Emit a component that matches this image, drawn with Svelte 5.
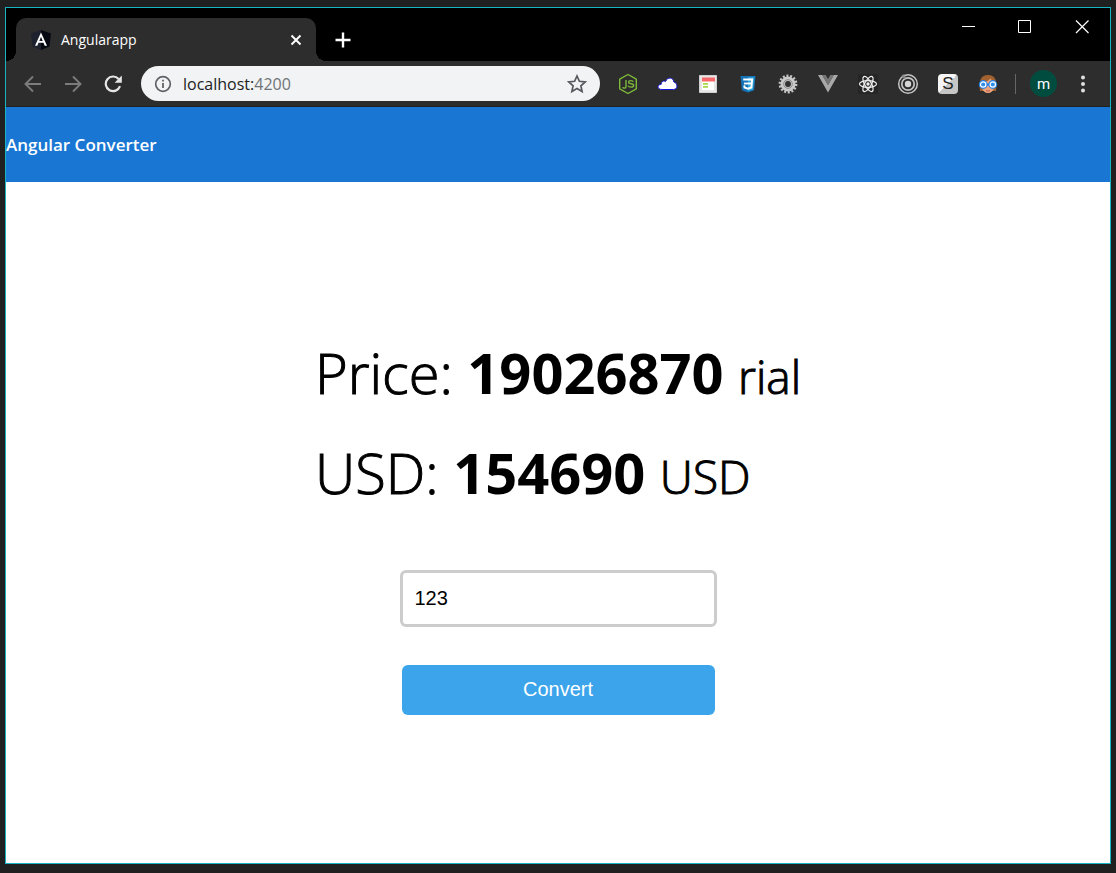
<script>
  let amount = $state('123');
  let price = $state(19026870);
  const rate = 154690;

  function convert(event) {
    event.preventDefault();
    price = Number(amount) * rate;
  }
</script>

<div class="desktop">
  <div class="window">
    <div class="titlebar">
      <div class="tab">
        <svg class="favicon" width="20" height="20" viewBox="0 0 20 20" aria-hidden="true">
          <path d="M10 0 0 3.5 1.5 16.500 10 20z" fill="#1d222e" />
          <path d="M10 0 20 3.500 18.500 16.500 10 20z" fill="#050811" />
          <path d="M10 2.500 4 15.800h2.300l1.200-3h5l1.200 3H16zM10 6.800l1.700 4.200H8.300z" fill="#fff" fill-rule="evenodd" />
        </svg>
        <span class="tab-title">Angularapp</span>
        <button class="plain tab-close" aria-label="Close tab">
          <svg width="12" height="12" viewBox="0 0 12 12"><path d="m1.500 1.500 9 9m0-9-9 9" stroke="#fff" stroke-width="2" /></svg>
        </button>
      </div>
      <button class="plain new-tab" aria-label="New tab">
        <svg width="16" height="16" viewBox="0 0 16 16"><path d="M8 .5v15M.5 8h15" stroke="#fff" stroke-width="2.400" /></svg>
      </button>
      <div class="controls">
        <button class="plain" aria-label="Minimize">
          <svg width="14" height="14" viewBox="0 0 14 14"><path d="M1 6.500h13" stroke="#fff" /></svg>
        </button>
        <button class="plain" aria-label="Maximize">
          <svg width="14" height="14" viewBox="0 0 14 14"><path d="M.5.5h12v12H.5z" stroke="#fff" fill="none" /></svg>
        </button>
        <button class="plain" aria-label="Close window">
          <svg width="14" height="14" viewBox="0 0 14 14"><path d="m1 .500 12.500 12.500m0-12.500L1 13" stroke="#fff" stroke-width="1.200" /></svg>
        </button>
      </div>
    </div>

    <div class="toolbar">
      <button class="plain tool" aria-label="Back">
        <svg width="18" height="18" viewBox="0 0 18 18" fill="none" stroke="#7c7c7c" stroke-width="1.900"><path d="M17 9H2M9 1.500 1.500 9 9 16.500" /></svg>
      </button>
      <button class="plain tool" aria-label="Forward">
        <svg width="18" height="18" viewBox="0 0 18 18" fill="none" stroke="#7c7c7c" stroke-width="1.900"><path d="M1 9h15M9 1.500 16.500 9 9 16.500" /></svg>
      </button>
      <button class="plain tool" aria-label="Reload">
        <svg width="18" height="18" viewBox="0 0 18 18"><path d="M14.600 4A7.300 7.300 0 1 0 16 11.200" fill="none" stroke="#e6e6e6" stroke-width="2.200" /><path d="M17.800.6v7.200h-7.200z" fill="#e6e6e6" /></svg>
      </button>
      <div class="address">
        <svg width="18" height="18" viewBox="0 0 18 18" aria-hidden="true"><circle cx="9" cy="9" r="7.300" fill="none" stroke="#5f6368" stroke-width="1.700" /><path d="M9 8v5M9 4.800v1.800" stroke="#5f6368" stroke-width="1.800" /></svg>
        <span class="url">localhost:<span class="port">4200</span></span>
        <button class="plain star" aria-label="Bookmark this page">
          <svg width="20" height="20" viewBox="0 0 20 20"><path d="m10 2 2.400 5.300 5.800.6-4.300 3.900 1.200 5.700-5.100-2.900-5.100 2.900 1.200-5.700-4.300-3.900 5.800-.6z" fill="none" stroke="#55595e" stroke-width="1.700" /></svg>
        </button>
      </div>
      <div class="extensions">
        <button class="plain tool" aria-label="Node.js">
          <svg width="22" height="22" viewBox="0 0 22 22" fill="none" stroke="#7fb93a" stroke-width="1.400"><path d="M11 1.500 19.300 6.200v9.600L11 20.500 2.700 15.800V6.200z" stroke-linejoin="round" /><path d="M9 7v6.200q0 2.400-2.300 1.800L5.500 14.300M16.300 8.700q-.5-1.100-2.400-1.100c-3 0-2.900 3 0 3.100 3.700.1 3.600 3.400.2 3.400q-2.600 0-3-1.500" /></svg>
        </button>
        <button class="plain tool" aria-label="Cloud">
          <svg width="22" height="22" viewBox="0 0 22 22"><path d="M5 16.500c-5.500 0-4.800-5.200-.8-5.200.1-3 2.800-4 4.300-2.700C10.800 3 16.500 4.800 16.800 9c3.800.7 4.800 7.500-.5 7.500z" fill="#fff" stroke="#1717db" /></svg>
        </button>
        <button class="plain tool" aria-label="Page layout">
          <svg width="20" height="20" viewBox="0 0 20 20"><path d="M1.500 1.500h17v17h-17z" fill="#e6e6e6" stroke="#d0d0d0" /><path d="M4 4h12v12H4z" fill="#fff" /><path d="M4 3.500h13v4H4z" fill="#f8686a" /><path d="M5 9h5v1.700H5zM5 12h5v1.700H5z" fill="#a5d84a" /></svg>
        </button>
        <button class="plain tool" aria-label="CSS viewer">
          <svg width="18" height="18" viewBox="0 0 18 18"><path d="M1.500 1h15l-1.400 14.300L9 17.500l-6.100-2.200z" fill="#1572b6" /><path d="M9 2.200h6.200l-1.200 12.200L9 16.200z" fill="#33a9dc" /><path d="M4.200 4.500h8.900l-.7 8L9 13.700l-3.500-1.200-.2-2.200" fill="none" stroke="#fff" stroke-width="1.900" /><path d="M5 8.500h7.500" stroke="#fff" stroke-width="1.900" /></svg>
        </button>
        <button class="plain tool" aria-label="Settings gear">
          <svg width="20" height="20" viewBox="0 0 20 20" fill="none"><circle cx="10" cy="10" r="8.200" stroke="#c5c5c5" stroke-width="2.400" stroke-dasharray="2 1.680" /><circle cx="10" cy="10" r="5.200" stroke="#c9c9c9" stroke-width="4.600" /><circle cx="10" cy="10" r="4.300" stroke="#898989" /><circle cx="10" cy="10" r="2.400" fill="#333" /></svg>
        </button>
        <button class="plain tool" aria-label="Vue devtools">
          <svg width="20" height="18" viewBox="0 0 20 18"><path d="M0 0h4.200L10 10 15.800 0H20L10 17.500z" fill="#a9a9a9" /><path d="M4.200 0h3.500L10 4l2.300-4h3.500L10 10.200z" fill="#777" /></svg>
        </button>
        <button class="plain tool" aria-label="React devtools">
          <svg width="20" height="20" viewBox="0 0 20 20" fill="none" stroke="#eee" stroke-width="1.200"><path d="M0 0h20v20H0z" fill="#262626" stroke="none" /><circle cx="10" cy="10" r="1.700" fill="#eee" stroke="none" /><ellipse cx="10" cy="10" rx="8.500" ry="3.300" /><ellipse cx="10" cy="10" rx="8.500" ry="3.300" transform="rotate(60 10 10)" /><ellipse cx="10" cy="10" rx="8.500" ry="3.300" transform="rotate(120 10 10)" /></svg>
        </button>
        <button class="plain tool" aria-label="Target">
          <svg width="22" height="22" viewBox="0 0 22 22" fill="none" stroke="#c4c4c4" stroke-width="1.500"><circle cx="11" cy="11" r="9.300" /><circle cx="11" cy="11" r="6.200" stroke-width="1.700" /><circle cx="11" cy="11" r="3.200" fill="#d6d6d6" stroke="none" /><path d="m5.500 2 3 3.300" stroke="#888" stroke-width="2.500" /></svg>
        </button>
        <button class="plain tool" aria-label="Stylus"><span class="letter-s">S</span></button>
        <button class="plain tool" aria-label="Reader">
          <svg width="20" height="20" viewBox="0 0 20 20"><path d="M2 17C.5 6 3 1 10 1s9.500 5 8 16z" fill="#a2622f" /><path d="M3.500 8Q10 8 12.500 4.500q1 3 4 3.500v5q-2 6-6.500 6t-6.500-6z" fill="#eaa57e" /><path d="M9 10.500h2" stroke="#1f7fe5" stroke-width="2" /><g fill="#1f7fe5"><circle cx="5.200" cy="10.500" r="4.400" /><circle cx="14.800" cy="10.500" r="4.400" /></g><g fill="#2d8eed" stroke="#fff" stroke-width="1.200"><circle cx="5.200" cy="10.500" r="2.700" /><circle cx="14.800" cy="10.500" r="2.700" /></g><path d="M8 16.500q2 1.300 4 0" stroke="#c45543" fill="none" /></svg>
        </button>
      </div>
      <span class="divider"></span>
      <button class="plain avatar" aria-label="Profile">m</button>
      <button class="plain menu" aria-label="Browser menu">
        <svg width="6" height="20" viewBox="0 0 6 20" fill="#e0e0e0"><circle cx="3" cy="3.500" r="2" /><circle cx="3" cy="10" r="2" /><circle cx="3" cy="16.500" r="2" /></svg>
      </button>
    </div>

    <header>
      <h1>Angular Converter</h1>
    </header>

    <main>
      <div class="results">
        <p>Price: <strong>{price}</strong> <small>rial</small></p>
        <p>USD: <strong>{rate}</strong> <small>USD</small></p>
      </div>
      <form onsubmit={convert}>
        <input type="text" aria-label="Amount" bind:value={amount} />
        <button class="convert" type="submit">Convert</button>
      </form>
    </main>
  </div>
</div>

<style>
  :global(body) {
    margin: 0;
    background: #202020;
  }
  .desktop {
    box-sizing: border-box;
    display: flex;
    min-height: 100vh;
    padding: 7px 5px 9px;
    background: #202020;
    font-family: "Open Sans", "Noto Sans", sans-serif;
  }
  .window {
    display: flex;
    flex: 1;
    flex-direction: column;
    min-width: 0;
    border: 1px solid #18b4c4;
    background: #fff;
  }
  .plain {
    display: flex;
    align-items: center;
    justify-content: center;
    padding: 0;
    border: 0;
    background: none;
  }
  svg {
    display: block;
    flex: none;
  }
  .titlebar {
    display: flex;
    align-items: flex-end;
    height: 53px;
    padding-left: 10px;
    background: #000;
  }
  .tab {
    position: relative;
    box-sizing: border-box;
    display: flex;
    align-items: center;
    width: 300px;
    height: 43px;
    padding: 0 14px 0 15px;
    border-radius: 10px 10px 0 0;
    background: #2d2d2d;
    color: #fff;
    font-size: 14px;
  }
  .tab::before,
  .tab::after {
    position: absolute;
    bottom: 0;
    width: 10px;
    height: 10px;
    content: "";
  }
  .tab::before {
    right: 100%;
    background: radial-gradient(circle at 0 0, #000 10px, #2d2d2d 10px);
  }
  .tab::after {
    left: 100%;
    background: radial-gradient(circle at 100% 0, #000 10px, #2d2d2d 10px);
  }
  .tab-title {
    flex: 1;
    margin-left: 10px;
  }
  .new-tab {
    width: 16px;
    height: 43px;
    margin-left: 19px;
  }
  .controls {
    display: flex;
    align-self: flex-start;
    margin-left: auto;
  }
  .controls button {
    width: 57px;
    height: 38px;
  }
  .toolbar {
    display: flex;
    align-items: center;
    height: 45px;
    padding: 0 17px 0 7px;
    border-bottom: 1px solid #202020;
    background: #2d2d2d;
  }
  .tool {
    width: 40px;
    height: 40px;
  }
  .address {
    box-sizing: border-box;
    display: flex;
    flex: 1;
    align-items: center;
    height: 35px;
    margin: 0 8px;
    padding: 0 13px;
    border-radius: 18px;
    background: #f1f3f4;
    color: #222;
    font-size: 16px;
  }
  .url {
    flex: 1;
    margin-left: 11px;
  }
  .port {
    color: #6f7377;
  }
  .extensions {
    display: flex;
  }
  .letter-s {
    width: 20px;
    height: 20px;
    border-radius: 4px;
    background: linear-gradient(135deg, #f5f5f5 50%, #c6c6c6 50%);
    color: #222;
    font: 17px/20px "Liberation Sans", sans-serif;
  }
  .divider {
    width: 1px;
    height: 20px;
    margin: 0 14px 0 7px;
    background: #666;
  }
  .avatar {
    width: 27px;
    height: 27px;
    border-radius: 50%;
    background: #004d40;
    color: #fff;
    font: 15px Roboto, sans-serif;
  }
  .menu {
    width: 20px;
    height: 30px;
    margin-left: 16px;
  }
  header {
    display: flex;
    align-items: center;
    height: 75px;
    background: #1976d3;
  }
  h1 {
    margin: 0;
    color: #fff;
    font-size: 17px;
    font-weight: 600;
  }
  main {
    display: flex;
    flex: 1;
    flex-direction: column;
    align-items: center;
    justify-content: center;
    padding-bottom: 8px;
    color: #000;
  }
  .results p {
    margin: 0;
    font-size: 56px;
    font-weight: 300;
    line-height: 100px;
    -webkit-text-stroke: 1px #000;
  }
  strong {
    font-weight: 700;
    -webkit-text-stroke: 0;
  }
  small {
    font-size: 46px;
    line-height: 1;
  }
  form {
    display: flex;
    flex-direction: column;
    align-items: center;
    gap: 38px;
    margin-top: 48px;
  }
  input {
    box-sizing: border-box;
    width: 317px;
    height: 57px;
    padding: 0 12px;
    border: 3px solid #ccc;
    border-radius: 6px;
    font: 20px "Liberation Sans", Arial, sans-serif;
  }
  .convert {
    width: 313px;
    height: 50px;
    padding: 0 0 2px;
    border: 0;
    border-radius: 6px;
    background: #3ba4eb;
    color: #fff;
    font: 20px "Liberation Sans", Arial, sans-serif;
  }
</style>
